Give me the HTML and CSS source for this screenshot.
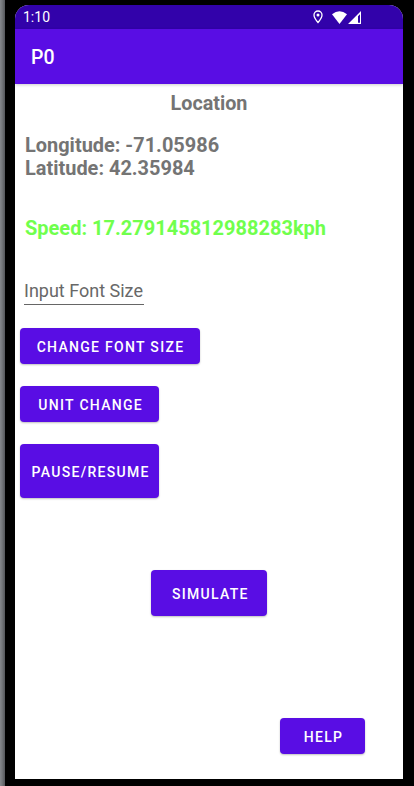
FILE: index.html
```html
<!DOCTYPE html>
<html lang="en">
<head>
<meta charset="utf-8">
<title>P0</title>
<link rel="stylesheet" href="styles.css">
</head>
<body>
<div class="device">
  <main class="screen">
    <div class="status">
      <span class="clock">1:10</span>
      <svg class="pin" width="10" height="14" viewBox="0 0 10 14"><path d="M5 1C2.700 1 1 2.700 1 5c0 2.800 4 7.500 4 7.500S9 7.800 9 5C9 2.700 7.300 1 5 1Z" fill="none" stroke="#fff" stroke-width="1.300"/><circle cx="5" cy="4.900" r="1.500" fill="#fff"/></svg>
      <svg class="wifi" width="15" height="13" viewBox="0 0 15 13"><path d="M0 3.300Q7.500-2.700 15 3.300L7.500 13Z" fill="#fff"/></svg>
      <svg class="signal" width="13" height="13" viewBox="0 0 13 13"><path d="M13 0V13H0ZM12 3.200 10 5.200V11.800H12Z" fill="#fff" fill-rule="evenodd"/></svg>
    </div>
    <header class="appbar"><h1>P0</h1></header>
    <section class="content">
      <h2 class="heading">Location</h2>
      <p class="coords">Longitude: -71.05986<br>Latitude: 42.35984</p>
      <p class="speed">Speed: 17.279145812988283kph</p>
      <div class="field">Input Font Size</div>
      <button class="btn font-size">CHANGE FONT SIZE</button>
      <button class="btn unit">UNIT CHANGE</button>
      <button class="btn pause">PAUSE/RESUME</button>
      <button class="btn simulate">SIMULATE</button>
      <button class="btn help">HELP</button>
    </section>
  </main>
</div>
</body>
</html>
```
FILE: styles.css
```css
* { box-sizing: border-box; margin: 0; padding: 0; }
body { font-family: Roboto, sans-serif; background: #000; overflow: hidden; }
.device {
  height: 786px;
  padding: 5px 11px 7px 15px;
  background: linear-gradient(90deg, #85888c 0, #75787c 2px, #54565a 5px, #000 5px);
}
.screen {
  height: 774px;
  background: #fff;
  border-radius: 14px 14px 0 0;
  overflow: hidden;
}
.status {
  display: flex;
  align-items: center;
  height: 24px;
  padding: 0 42px 0 8px;
  background: #3202aa;
}
.clock { color: #fff; font-size: 14px; line-height: 24px; margin-right: auto; }
.pin { margin-right: 9px; }
.wifi { margin-right: 1px; }
.appbar {
  height: 55px;
  padding-left: 16px;
  background: #590de4;
  box-shadow: 0 1px 3px rgba(0, 0, 0, .2);
}
.appbar h1 { color: #fff; font-size: 19.500px; font-weight: 500; line-height: 57px; }
.content { display: flex; flex-direction: column; align-items: flex-start; color: #747474; }
.heading { align-self: center; font-size: 19.800px; font-weight: 700; line-height: 23px; margin-top: 8px; }
.coords { font-size: 19.950px; font-weight: 700; line-height: 23px; margin: 19px 0 0 10px; }
.speed { color: #70ff4d; font-size: 20px; font-weight: 700; line-height: 23px; margin: 37px 0 0 10px; }
.field {
  width: 120px;
  height: 28px;
  margin: 37px 0 0 9px;
  border-bottom: 1px solid #666;
  color: #686868;
  font-size: 18px;
  line-height: 28px;
  white-space: nowrap;
}
.btn {
  padding: 1px 0 0 1px;
  border: 0;
  border-radius: 4px;
  background: #590de4;
  color: #fff;
  font: 500 14px/20px Roboto, sans-serif;
  letter-spacing: 1.300px;
  white-space: nowrap;
  box-shadow: 0 1px 2px rgba(0, 0, 0, .25);
}
.font-size { width: 180px; height: 36px; margin: 23px 0 0 5px; }
.unit { width: 139.400px; height: 36px; margin: 22px 0 0 5px; padding-left: 2px; }
.pause { width: 139.400px; height: 54px; margin: 22px 0 0 5px; padding-left: 2px; }
.simulate { width: 116px; height: 46px; margin: 72px 0 0 136.400px; padding-left: 2px; }
.help { width: 85px; height: 36px; margin: 102px 0 0 265px; padding-left: 2px; }
```
